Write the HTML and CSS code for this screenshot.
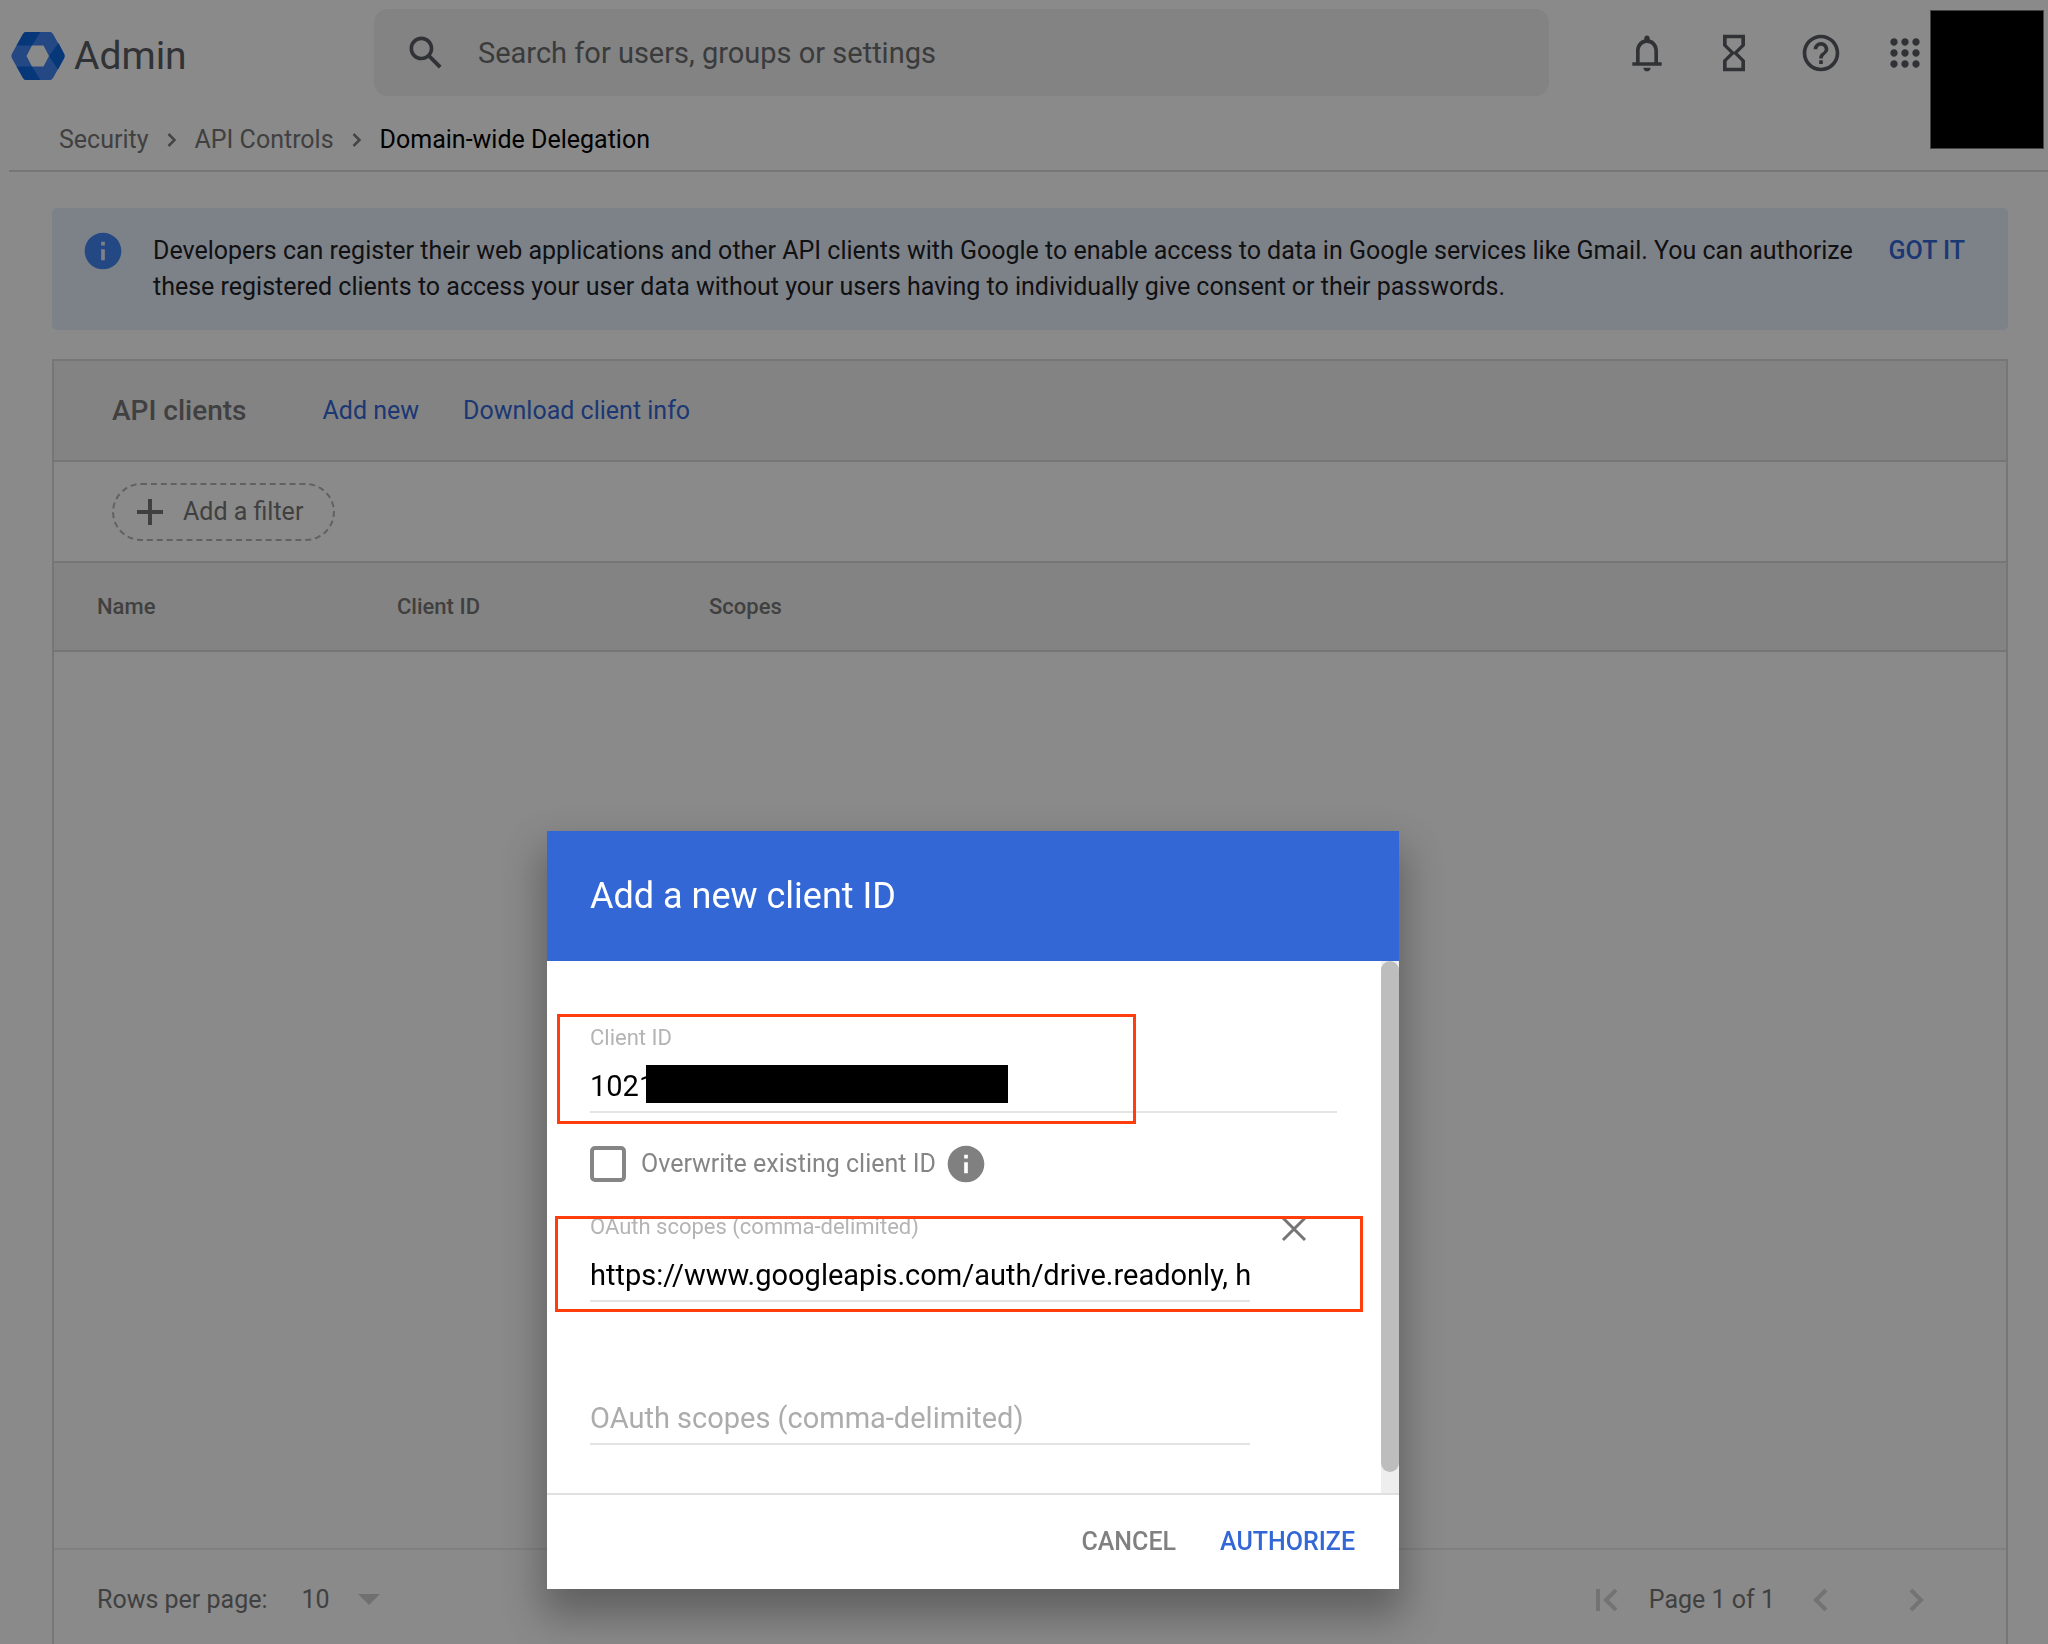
FILE: index.html
```
<!DOCTYPE html>
<html lang="en">
<head>
    <meta charset="UTF-8">
    <meta name="viewport" content="width=device-width, initial-scale=1.0">
    <title>Domain-wide Delegation - Admin Console</title>
    <link rel="stylesheet" href="styles.css">
</head>
<body>
    <header class="topbar">
        <a class="brand" href="#">
            <svg width="54" height="48" viewBox="0 0 54 48">
                <path fill="#4285f4" fill-rule="evenodd" d="M15 0h24q2 0 3 2l11.200 20q.8 2 0 4L42 46q-1 2-3 2H15q-2 0-3-2L.8 26q-.8-2 0-4L12 2q1-2 3-2zM21 13.500L15.500 24 21 34.500h11.500L38 24l-5.500-10.500z"/>
                <path fill="#0b66e0" d="M15 0h14.500L21 13.500H5.500L12 2q1-2 3-2zM5.500 34.500H21L29.500 48H15q-2 0-3-2zM47.500 11l5.700 11q.8 2 0 4L47 37.500 38 24z"/>
            </svg>
            <span>Admin</span>
        </a>
        <form class="search">
            <svg class="icon" viewBox="0 0 24 24"><path d="M20.490 19l-5.730-5.730C15.530 12.200 16 10.910 16 9.500 16 5.910 13.090 3 9.500 3S3 5.910 3 9.500 5.910 16 9.500 16c1.410 0 2.700-.47 3.770-1.240L19 20.490 20.490 19zM5 9.500C5 7.010 7.010 5 9.500 5S14 7.010 14 9.500 11.990 14 9.500 14 5 11.990 5 9.500z"/></svg>
            <input type="text" placeholder="Search for users, groups or settings" aria-label="Search for users, groups or settings">
        </form>
        <div class="tools">
            <button type="button" aria-label="Notifications">
                <svg class="icon" viewBox="0 0 24 24"><path d="M18 17v-6c0-3.070-1.630-5.640-4.500-6.320V4c0-.83-.67-1.500-1.500-1.500s-1.500.67-1.500 1.500v.68C7.640 5.360 6 7.920 6 11v6H4v2h16v-2h-2zm-2 0H8v-6c0-2.480 1.510-4.500 4-4.500s4 2.020 4 4.500v6zm-4 5c1.100 0 2-.9 2-2h-4c0 1.100.9 2 2 2z"/></svg>
            </button>
            <button type="button" aria-label="Tasks">
                <svg class="icon" viewBox="0 0 24 24"><path d="M6 2v6l4 4-4 4v6h12v-6l-4-4 4-4V2H6zm10 14.500V20H8v-3.500l4-4 4 4zm-4-5l-4-4V4h8v3.500l-4 4z"/></svg>
            </button>
            <button type="button" aria-label="Help">
                <svg class="icon" viewBox="0 0 24 24"><path d="M11 18h2v-2h-2v2zm1-16C6.480 2 2 6.480 2 12s4.480 10 10 10 10-4.480 10-10S17.520 2 12 2zm0 18c-4.410 0-8-3.590-8-8s3.590-8 8-8 8 3.590 8 8-3.590 8-8 8zm0-14c-2.210 0-4 1.790-4 4h2c0-1.100.9-2 2-2s2 .9 2 2c0 2-3 1.750-3 5h2c0-2.250 3-2.500 3-5 0-2.210-1.790-4-4-4z"/></svg>
            </button>
            <button type="button" aria-label="Google apps">
                <svg class="icon" viewBox="0 0 24 24"><path d="M6 8c1.100 0 2-.9 2-2s-.9-2-2-2-2 .9-2 2 .9 2 2 2zm6 12c1.100 0 2-.9 2-2s-.9-2-2-2-2 .9-2 2 .9 2 2 2zm-6 0c1.100 0 2-.9 2-2s-.9-2-2-2-2 .9-2 2 .9 2 2 2zm0-6c1.100 0 2-.9 2-2s-.9-2-2-2-2 .9-2 2 .9 2 2 2zm6 0c1.100 0 2-.9 2-2s-.9-2-2-2-2 .9-2 2 .9 2 2 2zm4-8c0 1.100.9 2 2 2s2-.9 2-2-.9-2-2-2-2 .9-2 2zm-4 2c1.100 0 2-.9 2-2s-.9-2-2-2-2 .9-2 2 .9 2 2 2zm6 6c1.100 0 2-.9 2-2s-.9-2-2-2-2 .9-2 2 .9 2 2 2zm0 6c1.100 0 2-.9 2-2s-.9-2-2-2-2 .9-2 2 .9 2 2 2z"/></svg>
            </button>
        </div>
    </header>

    <nav class="breadcrumb" aria-label="Breadcrumb">
        <a href="#">Security</a>
        <svg width="10" height="16" viewBox="0 0 10 16"><path d="M1.500 2l6 6-6 6"/></svg>
        <a href="#">API Controls</a>
        <svg width="10" height="16" viewBox="0 0 10 16"><path d="M1.500 2l6 6-6 6"/></svg>
        <span class="current">Domain-wide Delegation</span>
    </nav>

    <main class="content">
        <section class="banner">
            <svg class="icon" viewBox="0 0 24 24"><path d="M12 2C6.480 2 2 6.480 2 12s4.480 10 10 10 10-4.480 10-10S17.520 2 12 2zm1 15h-2v-6h2v6zm0-8h-2V7h2v2z"/></svg>
            <p>Developers can register their web applications and other API clients with Google to enable access to data in Google services like Gmail. You can authorize these registered clients to access your user data without your users having to individually give consent or their passwords.</p>
            <button type="button">GOT IT</button>
        </section>

        <section class="card">
            <div class="card-header">
                <h1>API clients</h1>
                <a href="#">Add new</a>
                <a href="#">Download client info</a>
            </div>
            <div class="filter-row">
                <button type="button" class="filter">
                    <svg width="26" height="26" viewBox="0 0 26 26"><path d="M13 0v26M0 13h26"/></svg>
                    Add a filter
                </button>
            </div>
            <table class="clients">
                <thead>
                    <tr>
                        <th class="col-name">Name</th>
                        <th class="col-id">Client ID</th>
                        <th>Scopes</th>
                    </tr>
                </thead>
                <tbody></tbody>
            </table>
            <div class="card-footer">
                <label for="rows">Rows per page:</label>
                <div class="rows-select">
                    <select id="rows">
                        <option>10</option>
                        <option>20</option>
                        <option>50</option>
                    </select>
                    <svg width="22" height="11" viewBox="0 0 22 11"><path d="M0 0h22L11 11z"/></svg>
                </div>
                <div class="pager">
                    <button type="button" aria-label="First page"><svg width="24" height="24" viewBox="0 0 24 24"><path d="M3 1v22M21 2L11 12l10 10"/></svg></button>
                    <span>Page 1 of 1</span>
                    <button type="button" class="prev" aria-label="Previous page"><svg width="24" height="24" viewBox="0 0 24 24"><path d="M17 2L7 12l10 10"/></svg></button>
                    <button type="button" class="next" aria-label="Next page"><svg width="24" height="24" viewBox="0 0 24 24"><path d="M7 2l10 10L7 22"/></svg></button>
                </div>
            </div>
        </section>
    </main>

    <div class="backdrop"></div>
    <div class="avatar-mask"></div>

    <div class="dialog" role="dialog" aria-labelledby="dialog-title">
        <h2 id="dialog-title">Add a new client ID</h2>
        <div class="dialog-body">
            <form class="fields">
                <div class="field marked-id">
                    <label for="client-id">Client ID</label>
                    <input type="text" id="client-id" value="1021">
                    <span class="mask"></span>
                </div>
                <div class="check">
                    <input type="checkbox" id="overwrite">
                    <label for="overwrite">Overwrite existing client ID</label>
                    <svg class="icon" viewBox="0 0 24 24"><path d="M12 2C6.480 2 2 6.480 2 12s4.480 10 10 10 10-4.480 10-10S17.520 2 12 2zm1 15h-2v-6h2v6zm0-8h-2V7h2v2z"/></svg>
                </div>
                <div class="scope marked-scope">
                    <div class="field">
                        <label for="scope-1">OAuth scopes (comma-delimited)</label>
                        <input type="text" id="scope-1" value="https://www.googleapis.com/auth/drive.readonly, https://www.googleapis.com/auth/admin.directory.user.readonly">
                    </div>
                    <button type="button" class="clear" aria-label="Remove scope"><svg width="26" height="26" viewBox="0 0 26 26"><path d="M2 2l22 22M24 2L2 24"/></svg></button>
                </div>
                <div class="scope">
                    <div class="field">
                        <input type="text" placeholder="OAuth scopes (comma-delimited)" aria-label="OAuth scopes (comma-delimited)">
                    </div>
                </div>
            </form>
            <div class="scrollbar"><div class="thumb"></div></div>
        </div>
        <div class="dialog-footer">
            <button type="button">CANCEL</button>
            <button type="button" class="primary">AUTHORIZE</button>
        </div>
    </div>
</body>
</html>
```

FILE: styles.css
```
*, *::before, *::after {
    box-sizing: border-box;
}
body {
    margin: 0;
    min-height: 100vh;
    display: flex;
    flex-direction: column;
    background-color: #ffffff;
    color: #202124;
    font-family: Roboto, "Liberation Sans", sans-serif;
    font-size: 25px;
    line-height: 36px;
}
a {
    color: inherit;
    text-decoration: none;
}
button {
    border: none;
    padding: 0;
    background: none;
    color: inherit;
    font: inherit;
    cursor: pointer;
}
input, select {
    font: inherit;
    border: none;
    padding: 0;
    margin: 0;
    background: none;
    outline: none;
}
svg {
    display: block;
    flex-shrink: 0;
}
.icon {
    width: 44px;
    height: 44px;
    fill: #5a5d62;
}

/* top bar */
.topbar {
    display: flex;
    align-items: center;
    padding: 9px 121px 0 11px;
}
.brand {
    display: flex;
    align-items: center;
    gap: 9px;
    width: 363px;
    padding-top: 6px;
    color: #5a5d62;
    font-size: 39px;
}
.search {
    flex: 1;
    max-width: 1175px;
    height: 87px;
    display: flex;
    align-items: center;
    gap: 30px;
    padding: 0 30px;
    border-radius: 14px;
    background-color: #f2f2f2;
}
.search input {
    flex: 1;
    font-size: 29px;
    color: #5f6368;
}
.search input::placeholder {
    color: #6c6e70;
    opacity: 1;
}
.tools {
    display: flex;
    gap: 43px;
    margin-left: auto;
}
.tools button:last-child {
    margin-left: -3px;
}

/* breadcrumb */
.breadcrumb {
    display: flex;
    align-items: center;
    gap: 18px;
    margin-left: 9px;
    padding: 26px 50px 12px;
    border-bottom: 2px solid #dadada;
    color: #777777;
}
.breadcrumb svg {
    fill: none;
    stroke: #808080;
    stroke-width: 2.500;
}
.breadcrumb .current {
    color: #000000;
}

.content {
    flex: 1;
    display: flex;
    flex-direction: column;
    gap: 29px;
    padding: 36px 40px 0 52px;
}

/* info banner */
.banner {
    display: flex;
    align-items: flex-start;
    padding: 25px 43px 25px 29px;
    border-radius: 5px;
    background-color: #e8f0fe;
}
.banner .icon {
    fill: #4285f4;
    margin-top: -4px;
}
.banner p {
    flex: 1;
    margin: 0 19px 0 28px;
}
.banner button {
    color: #3367d6;
    font-weight: 500;
}

/* clients card */
.card {
    flex: 1;
    display: flex;
    flex-direction: column;
    border: 2px solid #dadada;
    border-bottom: none;
    color: #777777;
}
.card-header {
    display: flex;
    align-items: center;
    gap: 44px;
    height: 101px;
    padding: 0 58px;
    border-bottom: 2px solid #dadada;
    background-color: #f3f3f3;
    color: #3367d6;
}
.card-header h1 {
    margin: 0 32px 0 0;
    color: #777777;
    font-size: 28px;
    font-weight: 500;
}
.filter-row {
    display: flex;
    align-items: center;
    height: 101px;
    padding: 0 58px;
    border-bottom: 2px solid #dadada;
}
.filter {
    display: flex;
    align-items: center;
    gap: 20px;
    height: 58px;
    padding: 0 30px 0 23px;
    border: 2px dashed #b4b4b4;
    border-radius: 29px;
}
.filter svg {
    stroke: #777777;
    stroke-width: 4;
}
.clients {
    width: 100%;
    border-collapse: collapse;
    table-layout: fixed;
}
.clients th {
    height: 88px;
    padding: 0;
    border-bottom: 2px solid #dadada;
    background-color: #f3f3f3;
    text-align: left;
    font-size: 22px;
    font-weight: 500;
}
.clients .col-name {
    width: 343px;
    padding-left: 43px;
}
.clients .col-id {
    width: 312px;
}
.card-footer {
    display: flex;
    align-items: center;
    height: 96px;
    margin-top: auto;
    padding: 6px 78px 0 43px;
    border-top: 2px solid #ececec;
}
.rows-select {
    position: relative;
    margin-left: 34px;
}
.rows-select select {
    width: 78px;
    height: 36px;
    appearance: none;
    color: #777777;
}
.rows-select svg {
    position: absolute;
    right: 0;
    top: 12px;
    fill: #d0d0d0;
    pointer-events: none;
}
.pager {
    display: flex;
    align-items: center;
    margin-left: auto;
}
.pager svg {
    fill: none;
    stroke: #d4d4d4;
    stroke-width: 4;
}
.pager span {
    margin: 0 34px 0 30px;
}
.pager .next {
    margin-left: 71px;
}

/* overlay */
.backdrop {
    position: fixed;
    inset: 0;
    background-color: rgba(0, 0, 0, 0.46);
}
.avatar-mask {
    position: absolute;
    top: 10px;
    right: 4px;
    width: 114px;
    height: 139px;
    border: 1px solid #444444;
    background-color: #000000;
}

/* dialog */
.dialog {
    position: fixed;
    left: 547px;
    bottom: 55px;
    width: 852px;
    background-color: #ffffff;
    box-shadow: 0 22px 38px 5px rgba(0, 0, 0, 0.3);
}
.dialog h2 {
    margin: 0;
    padding: 43px;
    background-color: #3367d6;
    color: #ffffff;
    font-size: 36px;
    font-weight: 400;
    line-height: 44px;
}
.dialog-body {
    display: flex;
    border-bottom: 2px solid #e0e0e0;
}
.fields {
    flex: 1;
    padding: 62px 44px 48px 43px;
}
.field {
    position: relative;
    display: flex;
    flex-direction: column;
    border-bottom: 2px solid #e4e4e4;
}
.field label {
    color: #b4b4b4;
    font-size: 22px;
    line-height: 30px;
}
.field input {
    width: 100%;
    height: 58px;
    padding-top: 8px;
    color: #000000;
    font-size: 29px;
}
.field input::placeholder {
    color: #acacac;
    opacity: 1;
}
.mask {
    position: absolute;
    left: 56px;
    top: 42px;
    width: 362px;
    height: 38px;
    background-color: #000000;
}
.marked-id, .marked-scope {
    position: relative;
}
/* highlight frames round the values to fill in */
.marked-id::after, .marked-scope::after {
    content: "";
    position: absolute;
    border: 3px solid #ff3d0d;
    pointer-events: none;
}
.marked-id::after {
    left: -33px;
    top: -9px;
    width: 579px;
    height: 110px;
}
.marked-scope::after {
    left: -35px;
    top: 4px;
    width: 808px;
    height: 96px;
}
.check {
    display: flex;
    align-items: center;
    margin-top: 29px;
    color: #858585;
}
.check input {
    appearance: none;
    width: 36px;
    height: 36px;
    margin-right: 15px;
    border: 4px solid #858585;
    border-radius: 5px;
}
.check .icon {
    margin-left: 8px;
    fill: #808080;
}
.scope {
    display: flex;
    margin-top: 26px;
}
.scope .field {
    flex: 1;
    max-width: 660px;
}
.scope + .scope {
    margin-top: 83px;
}
.clear {
    align-self: flex-start;
    margin: 4px 0 0 31px;
}
.clear svg {
    stroke: #757575;
    stroke-width: 3;
}
.scrollbar {
    width: 18px;
    background-color: #eeeeee;
}
.thumb {
    height: 96%;
    border-radius: 9px;
    background-color: #bdbdbd;
}
.dialog-footer {
    display: flex;
    justify-content: flex-end;
    gap: 44px;
    padding: 29px 44px;
    color: #808080;
    font-weight: 500;
}
.dialog-footer .primary {
    color: #3367d6;
}
```
